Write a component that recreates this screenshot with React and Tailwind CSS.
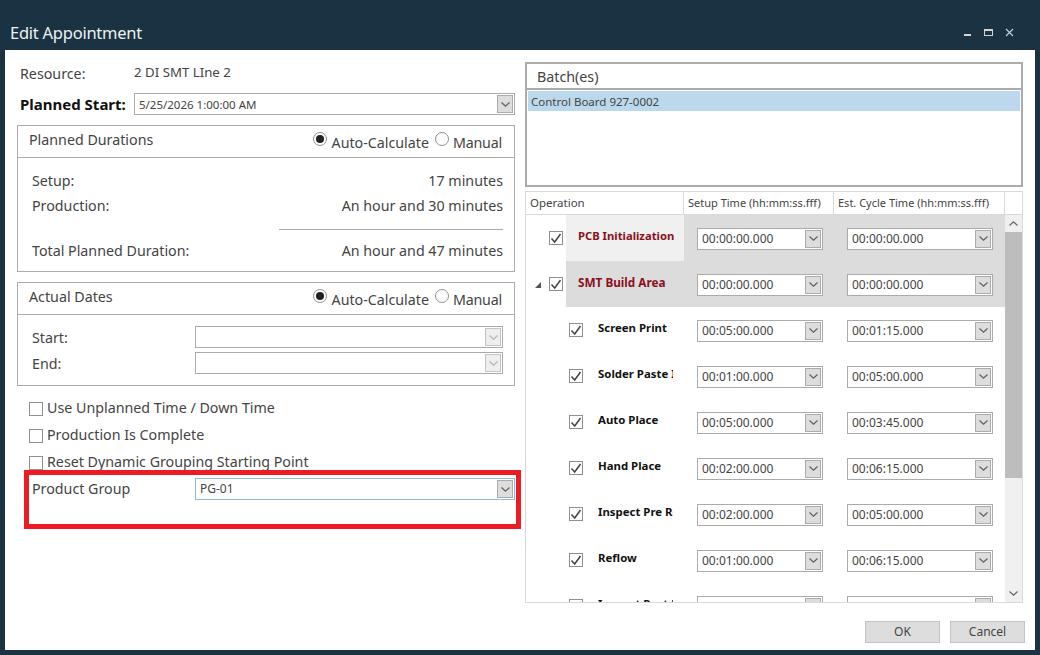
import React from "react";

const Chevron = ({ c = "#606060" }) => (
  <svg width="9" height="5" viewBox="0 0 9 5" fill="none">
    <path d="M0.5 0.5 L4.5 4.2 L8.5 0.5" stroke={c} strokeWidth="1.2" />
  </svg>
);

const Combo = ({ text = "", className = "", disabled = false, focused = false, size = "text-[12px]" }) => (
  <div className={`flex items-center bg-white border h-[22px] ${focused ? "border-[#8fbcdb]" : "border-[#ababab]"} ${className}`}>
    <span className={`flex-1 pl-1 text-[#444] leading-none whitespace-nowrap ${size}`}>{text}</span>
    <span className={`flex items-center justify-center w-[16px] h-[18px] mr-[1px] border ${disabled ? "bg-[#eeeeee] border-[#c4c4c4]" : "bg-[#dddddd] border-[#ababab]"}`}>
      <Chevron c={disabled ? "#b5b5b5" : "#606060"} />
    </span>
  </div>
);

const Check = ({ checked, className = "" }) => (
  <span className={`flex items-center justify-center w-[14px] h-[14px] border border-[#8f8f8f] bg-white shrink-0 ${className}`}>
    {checked && (
      <svg width="12" height="11" viewBox="0 0 12 11" fill="none">
        <path d="M1.5 5.5 L4.7 9 L10.5 1" stroke="#444" strokeWidth="1.5" />
      </svg>
    )}
  </span>
);

const Radio = ({ on }) => (
  <span className="flex items-center justify-center w-[14px] h-[14px] rounded-full border border-[#8f8f8f] bg-white shrink-0 -mt-[6px]">
    {on && <span className="w-[8px] h-[8px] rounded-full bg-[#222]" />}
  </span>
);

const Header = ({ title }) => (
  <div className="flex items-center justify-between h-[32px] pl-[11px] pr-[12px] border-b border-[#ababab]">
    <span className="text-[14.25px] text-[#444] -mt-[4px]">{title}</span>
    <div className="flex items-center text-[14.25px] text-[#444]">
      <Radio on />
      <span className="ml-[5px] mr-[6px] mt-[2px]">Auto-Calculate</span>
      <Radio />
      <span className="ml-[4px] mt-[2px] tracking-[-0.2px]">Manual</span>
    </div>
  </div>
);

const Row = ({ left, right }) => (
  <div className="flex justify-between text-[14.25px] text-[#444] h-[25px] items-center">
    <span>{left}</span>
    <span>{right}</span>
  </div>
);

const CheckRow = ({ label }) => (
  <div className="flex items-center h-[27px] pl-[12px] text-[14.25px] text-[#444]">
    <Check />
    <span className="ml-[4px] -mt-[2px]">{label}</span>
  </div>
);

const rows = [
  { name: "PCB Initialization", a: "00:00:00.000", b: "00:00:00.000", top: 1 },
  { name: "SMT Build Area", a: "00:00:00.000", b: "00:00:00.000", top: 2 },
  { name: "Screen Print", a: "00:05:00.000", b: "00:01:15.000" },
  { name: "Solder Paste Inspection", a: "00:01:00.000", b: "00:05:00.000" },
  { name: "Auto Place", a: "00:05:00.000", b: "00:03:45.000" },
  { name: "Hand Place", a: "00:02:00.000", b: "00:06:15.000" },
  { name: "Inspect Pre Reflow", a: "00:02:00.000", b: "00:05:00.000" },
  { name: "Reflow", a: "00:01:00.000", b: "00:06:15.000" },
  { name: "Inspect Post Line", a: "", b: "" },
];

const GridRow = ({ r }) => {
  const top = !!r.top;
  return (
    <div className="flex h-[46px] shrink-0">
      <div className="flex w-[158px] shrink-0">
        {top ? (
          <>
            <div className="w-[40px] flex items-center shrink-0">
              {r.top === 2 && (
                <svg width="8" height="8" viewBox="0 0 8 8" className="ml-[8px] mt-[1px]">
                  <path d="M7 1 V7 H1 Z" fill="#555" />
                </svg>
              )}
              <Check checked className="absolute ml-[23px]" />
            </div>
            <div className={`flex-1 pl-[12px] pt-[13px] overflow-hidden ${r.top === 1 ? "bg-[#f0f0f0]" : "bg-[#dcdcdc]"}`}>
              <div className={`w-[96px] overflow-hidden whitespace-nowrap font-bold text-[#8b0f1a] leading-[16px] ${r.top === 1 ? "text-[11.25px]" : "text-[11.75px]"}`}>{r.name}</div>
            </div>
          </>
        ) : (
          <>
            <div className="w-[43px] shrink-0 flex items-center pl-[43px]">
              <Check checked />
            </div>
            <div className="pl-[29px] pt-[13px]">
              <div className="w-[75px] overflow-hidden whitespace-nowrap text-[11.4px] font-bold text-[#111] leading-[16px]">{r.name}</div>
            </div>
          </>
        )}
      </div>
      <div className={`flex-1 flex items-center pl-[13px] ${top ? "bg-[#dcdcdc]" : ""}`}>
        <Combo text={r.a} className="w-[126px] mt-[1px]" />
        <Combo text={r.b} className="w-[146px] ml-[24px] mt-[1px]" />
      </div>
    </div>
  );
};

export default function App() {
  return (
    <div className="relative w-[1040px] h-[655px] bg-[#1b3242] pt-[50px] px-[5px] pb-[5px] font-['Noto_Sans',sans-serif] overflow-hidden">
      <div className="absolute left-[10px] top-[21px] text-[16.5px] tracking-[-0.25px] leading-[24px] text-[#eef2f4]">Edit Appointment</div>
      <div className="absolute left-[964px] top-[26px] flex items-start">
        <span className="block w-[7px] h-[2px] bg-[#d5d5d5] mt-[8px]" />
        <span className="block w-[9px] h-[7px] border border-t-2 border-[#d5d5d5] ml-[13px] mt-[3px]" />
        <svg width="9" height="9" viewBox="0 0 9 9" className="ml-[12px] mt-[2px]">
          <path d="M1 1 L8 8 M8 1 L1 8" stroke="#c8ced2" strokeWidth="1.2" />
        </svg>
      </div>

      <div className="bg-white h-[600px] flex flex-col">
        <div className="flex pl-[12px] pt-[12px] gap-[10px] h-[553px]">
          <div className="w-[498px] shrink-0">
            <div className="flex items-center h-[22px] pt-[1px] pl-[3px] text-[#444]">
              <span className="w-[114px] text-[14.25px]">Resource:</span>
              <span className="text-[13.25px] -mt-[2px]">2 DI SMT LIne 2</span>
            </div>
            <div className="flex items-center h-[22px] mt-[9px] pl-[3px]">
              <span className="w-[114px] text-[15px] font-bold text-[#111]">Planned Start:</span>
              <Combo text="5/25/2026 1:00:00 AM" size="text-[11.5px] pt-[1px]" className="flex-1" />
            </div>

            <div className="mt-[10px] border border-[#ababab] h-[147px]">
              <Header title="Planned Durations" />
              <div className="pl-[14px] pr-[11px] pt-[10px]">
                <Row left="Setup:" right="17 minutes" />
                <Row left="Production:" right="An hour and 30 minutes" />
                <div className="h-px bg-[#ababab] ml-[247px] mt-[11px] mb-[8px]" />
                <Row left="Total Planned Duration:" right="An hour and 47 minutes" />
              </div>
            </div>

            <div className="mt-[10px] border border-[#ababab] h-[104px]">
              <Header title="Actual Dates" />
              <div className="pl-[14px] pr-[11px] pt-[11px] flex flex-col gap-[4px]">
                {["Start:", "End:"].map((l) => (
                  <div key={l} className="flex items-center h-[22px] text-[14.25px] text-[#444]">
                    <span className="w-[163px] mt-[2px]">{l}</span>
                    <Combo disabled className="flex-1" />
                  </div>
                ))}
              </div>
            </div>

            <div className="mt-[9px]">
              <CheckRow label="Use Unplanned Time / Down Time" />
              <CheckRow label="Production Is Complete" />
              <CheckRow label="Reset Dynamic Grouping Starting Point" />
            </div>
            <div className="flex items-center pl-[15px] text-[14.25px] text-[#444] mt-[2px]">
              <span className="w-[163px]">Product Group</span>
              <Combo text="PG-01" focused className="flex-1" />
            </div>
          </div>

          <div className="w-[498px] shrink-0">
            <div className="border-2 border-[#ababab] h-[125px] flex flex-col">
              <div className="h-[26px] pl-[10px] pt-[1px] text-[14.25px] text-[#444] flex items-center border-b-2 border-[#ababab] shrink-0">Batch(es)</div>
              <div className="flex-1 p-[1px]">
                <div className="h-[20px] bg-[#bcd8ec] pl-[3px] text-[11.5px] text-[#444] flex items-center pt-[1px]">Control Board 927-0002</div>
              </div>
            </div>

            <div className="mt-[4px] border border-[#d9d9d9] h-[412px] flex flex-col overflow-hidden">
              <div className="flex h-[23px] shrink-0 border-b border-[#d9d9d9] text-[11px] text-[#444]">
                <div className="w-[158px] pl-[4px] border-r border-[#d9d9d9] flex items-center text-[11.5px]">Operation</div>
                <div className="w-[150px] pl-[4px] border-r border-[#d9d9d9] flex items-center">Setup Time (hh:mm:ss.fff)</div>
                <div className="w-[171px] pl-[4px] border-r border-[#d9d9d9] flex items-center whitespace-nowrap">Est. Cycle Time (hh:mm:ss.fff)</div>
              </div>
              <div className="flex flex-1 min-h-0">
                <div className="w-[479px] shrink-0 overflow-hidden">
                  {rows.map((r) => (
                    <GridRow key={r.name} r={r} />
                  ))}
                </div>
                <div className="w-[17px] bg-[#f0f0f0] flex flex-col items-center shrink-0">
                  <div className="h-[17px] w-full flex items-center justify-center">
                    <svg width="9" height="5" viewBox="0 0 9 5" fill="none"><path d="M0.5 4.5 L4.5 0.8 L8.5 4.5" stroke="#666" strokeWidth="1.2" /></svg>
                  </div>
                  <div className="w-full h-[246px] bg-[#bdbdbd]" />
                  <div className="flex-1" />
                  <div className="h-[17px] flex items-center justify-center"><Chevron c="#666" /></div>
                </div>
              </div>
            </div>
          </div>
        </div>

        <div className="flex justify-end gap-[10px] pr-[10px] pt-[18px]">
          {["OK", "Cancel"].map((t) => (
            <button key={t} className="w-[75px] h-[22px] bg-[#dddddd] border border-[#c4c4c4] text-[12px] text-[#444] flex items-center justify-center">{t}</button>
          ))}
        </div>
      </div>

      <div className="absolute left-[24px] top-[470px] w-[497px] h-[59px] border-[5px] border-[#ed1c24] pointer-events-none" />
    </div>
  );
}
